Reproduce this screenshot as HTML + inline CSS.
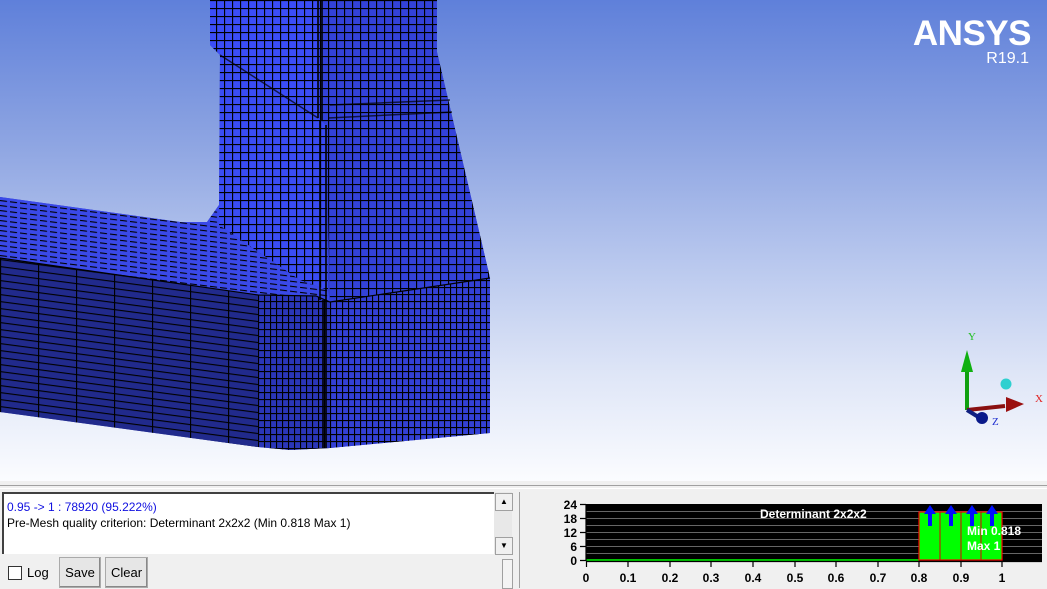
<!DOCTYPE html>
<html><head><meta charset="utf-8"><style>
html,body{margin:0;padding:0;width:1047px;height:588px;overflow:hidden;background:#f0f0f0;font-family:"Liberation Sans",Arial,sans-serif}
#view{position:absolute;left:0;top:0;width:1047px;height:481px;background:linear-gradient(#5f80da 0%,#8ea5e2 30%,#b9c8ee 55%,#dfe6f7 78%,#fbfcff 100%)}
.abs{position:absolute}
</style></head><body>
<div id="view">
<svg width="1047" height="481" class="abs" style="left:0;top:0">
<defs>
<pattern id="g7" width="8" height="8" patternUnits="userSpaceOnUse"><path d="M0 0.5H8M0.5 0V8" stroke="#000" stroke-width="1.3"/></pattern>
<pattern id="g5" width="6" height="7" patternUnits="userSpaceOnUse"><path d="M0 0.5H6M0.5 0V7" stroke="#000" stroke-width="1.2"/></pattern>
<pattern id="gtop" width="10" height="5" patternUnits="userSpaceOnUse" patternTransform="skewY(7)"><path d="M0 0.5H7" stroke="#000" stroke-width="1.2"/></pattern>
<pattern id="gfront" width="38" height="7" patternUnits="userSpaceOnUse" patternTransform="skewY(7.5)"><path d="M0 0.5H38M0.5 0V7" stroke="#000" stroke-width="1.3"/></pattern>
</defs>
<!-- base fill to avoid gaps -->
<polygon points="0,197 180,222 207,222 219,205 220,55 210,45 210,0 437,0 437,52 490,278 490,433 330,448 290,450 258,447 0,412" fill="#2f3cc8"/>
<!-- arm top face -->
<polygon points="0,197 180,222 207,222 219,205 219,225 300,280 328,290 330,302 258,295 0,258" fill="#3a49e8"/>
<polygon points="0,197 180,222 207,222 219,205 219,225 300,280 328,290 330,302 258,295 0,258" fill="url(#gtop)"/>
<!-- arm front -->
<polygon points="0,258 258,295 258,447 0,412" fill="#212a8c"/>
<polygon points="0,258 258,295 258,447 0,412" fill="url(#gfront)"/>
<!-- chamfer face -->
<polygon points="258,295 316,296 330,302 330,448 290,450 258,447" fill="#2a36b8"/>
<polygon points="258,295 316,296 330,302 330,448 290,450 258,447" fill="url(#g5)"/>
<!-- pillar left face -->
<polygon points="210,0 318,0 318,118 220,55 210,45" fill="#3b4df6"/>
<polygon points="220,55 318,118 326,125 328,290 300,280 219,225" fill="#3a4cf3"/>
<polygon points="210,0 318,0 318,118 326,125 328,290 300,280 219,225 220,55 210,45" fill="url(#g7)"/>
<!-- pillar right face -->
<polygon points="318,0 437,0 437,52 490,278 330,302 326,125 318,118" fill="#3342d9"/>
<polygon points="318,0 437,0 437,52 490,278 330,302 326,125 318,118" fill="url(#g7)"/>
<!-- lower right box -->
<polygon points="330,302 490,278 490,433 330,448" fill="#3340d6"/>
<polygon points="330,302 490,278 490,433 330,448" fill="url(#g5)"/>
<!-- dense seams -->
<path d="M318 0V118M322 0V120M326 125V448M320 120V300M323 300V448" stroke="#000" stroke-width="2" opacity="0.8"/>
<path d="M220 55L318 118M330 105L450 100M328 118L452 112" stroke="#000" stroke-width="1.5" opacity="0.7"/>
<path d="M0 258L258 295L316 296L330 302L490 278" stroke="#000" stroke-width="1.2" fill="none"/>
<!-- triad -->
<line x1="967" y1="370" x2="967" y2="410" stroke="#10a010" stroke-width="4"/>
<polygon points="967,350 961,372 973,372" fill="#10b010"/>
<line x1="967" y1="410" x2="1005" y2="406" stroke="#8a1010" stroke-width="4"/>
<polygon points="1024,404 1006,397 1006,412" fill="#9a1010"/>
<line x1="967" y1="410" x2="980" y2="418" stroke="#102080" stroke-width="4"/>
<circle cx="982" cy="418" r="6" fill="#0a1a8a"/>
<circle cx="1006" cy="384" r="5.5" fill="#2fd0d0"/>
<text x="968" y="340" font-size="11" fill="#20c020" font-family="Liberation Serif">Y</text>
<text x="1035" y="402" font-size="11" fill="#e02020" font-family="Liberation Serif">X</text>
<text x="992" y="425" font-size="11" fill="#2030d0" font-family="Liberation Serif">Z</text>
</svg>
<div class="abs" style="right:16px;top:14px;color:#fff;font-size:35px;font-weight:bold;letter-spacing:-0.5px">ANSYS</div>
<div class="abs" style="right:18px;top:50px;color:#fff;font-size:16px">R19.1</div>
</div>
<!-- bottom panel -->
<div class="abs" style="left:0;top:485px;width:1047px;height:2px;border-top:1px solid #a0a0a0;border-bottom:1px solid #fff"></div>
<div class="abs" style="left:2px;top:492px;width:490px;height:60px;background:#fff;border-top:2px solid #404040;border-left:2px solid #404040"></div>
<div class="abs" style="left:7px;top:500px;font-size:12px;color:#1010e0">0.95 -&gt; 1 : 78920 (95.222%)</div>
<div class="abs" style="left:7px;top:516px;font-size:12px;color:#000">Pre-Mesh quality criterion: Determinant 2x2x2 (Min 0.818 Max 1)</div>
<div class="abs" style="left:494px;top:492px;width:18px;height:62px;background:#e8e8e8"></div>
<div class="abs" style="left:495px;top:493px;width:16px;height:16px;background:#f0f0f0;border:1px solid #a0a0a0;font-size:8px;text-align:center;line-height:16px">▲</div>
<div class="abs" style="left:495px;top:537px;width:16px;height:16px;background:#f0f0f0;border:1px solid #a0a0a0;font-size:8px;text-align:center;line-height:16px">▼</div>
<div class="abs" style="left:502px;top:559px;width:9px;height:28px;border:1px solid #a0a0a0;background:#f4f4f4"></div>
<div class="abs" style="left:8px;top:566px;width:12px;height:12px;background:#fff;border:1px solid #333"></div>
<div class="abs" style="left:27px;top:565px;font-size:13px">Log</div>
<div class="abs" style="left:59px;top:557px;width:40px;height:29px;border:1px solid #aaa;background:#e6e6e6;box-shadow:inset -1px -1px #888;font-size:13px;text-align:center;line-height:29px">Save</div>
<div class="abs" style="left:105px;top:557px;width:41px;height:29px;border:1px solid #aaa;background:#e6e6e6;box-shadow:inset -1px -1px #888;font-size:13px;text-align:center;line-height:29px">Clear</div>
<div class="abs" style="left:519px;top:492px;width:1px;height:96px;background:#a0a0a0"></div>
<svg class="abs" style="left:520px;top:492px" width="527" height="96">
<rect x="66" y="12" width="456" height="57" fill="#000"/>
<g stroke="#666" stroke-width="1">
<path d="M66 19.5H522M66 26.5H522M66 33.5H522M66 40.5H522M66 47.5H522M66 54.5H522M66 61.5H522"/>
</g>
<line x1="66" y1="68" x2="399" y2="68" stroke="#00ff00" stroke-width="1.5"/>
<rect x="399" y="20" width="83" height="48" fill="#00ff00" stroke="#ff0000" stroke-width="1.2"/>
<path d="M420 20V68M441 20V68M461 20V68" stroke="#d00" stroke-width="1"/>
<g fill="#0010ff">
<polygon points="410,13 404,22 408,22 408,34 412,34 412,22 416,22"/>
<polygon points="431,13 425,22 429,22 429,34 433,34 433,22 437,22"/>
<polygon points="452,13 446,22 450,22 450,34 454,34 454,22 458,22"/>
<polygon points="472,13 466,22 470,22 470,34 474,34 474,22 478,22"/>
</g>
<g fill="#fff" font-size="12" font-weight="bold" font-family="Liberation Sans">
<text x="240" y="26">Determinant 2x2x2</text>
<text x="447" y="43">Min 0.818</text>
<text x="447" y="58">Max 1</text>
</g>
<path d="M66 12V69M60 12.5H66M60 26.5H66M60 40.5H66M60 54.5H66M60 68.5H66" stroke="#000" stroke-width="1.2"/>
<g fill="#000" font-size="12" font-weight="bold" text-anchor="end">
<text x="57" y="17">24</text><text x="57" y="31">18</text><text x="57" y="45">12</text><text x="57" y="59">6</text><text x="57" y="73">0</text>
</g>
<path d="M66 69.5H522M66.5 69V75M108 69V75M150 69V75M191 69V75M233 69V75M275 69V75M316 69V75M358 69V75M399 69V75M441 69V75M482 69V75" stroke="#000" stroke-width="1.2"/>
<g fill="#000" font-size="12" font-weight="bold" text-anchor="middle">
<text x="66" y="90">0</text><text x="108" y="90">0.1</text><text x="150" y="90">0.2</text><text x="191" y="90">0.3</text><text x="233" y="90">0.4</text><text x="275" y="90">0.5</text><text x="316" y="90">0.6</text><text x="358" y="90">0.7</text><text x="399" y="90">0.8</text><text x="441" y="90">0.9</text><text x="482" y="90">1</text>
</g>
</svg>
</body></html>
